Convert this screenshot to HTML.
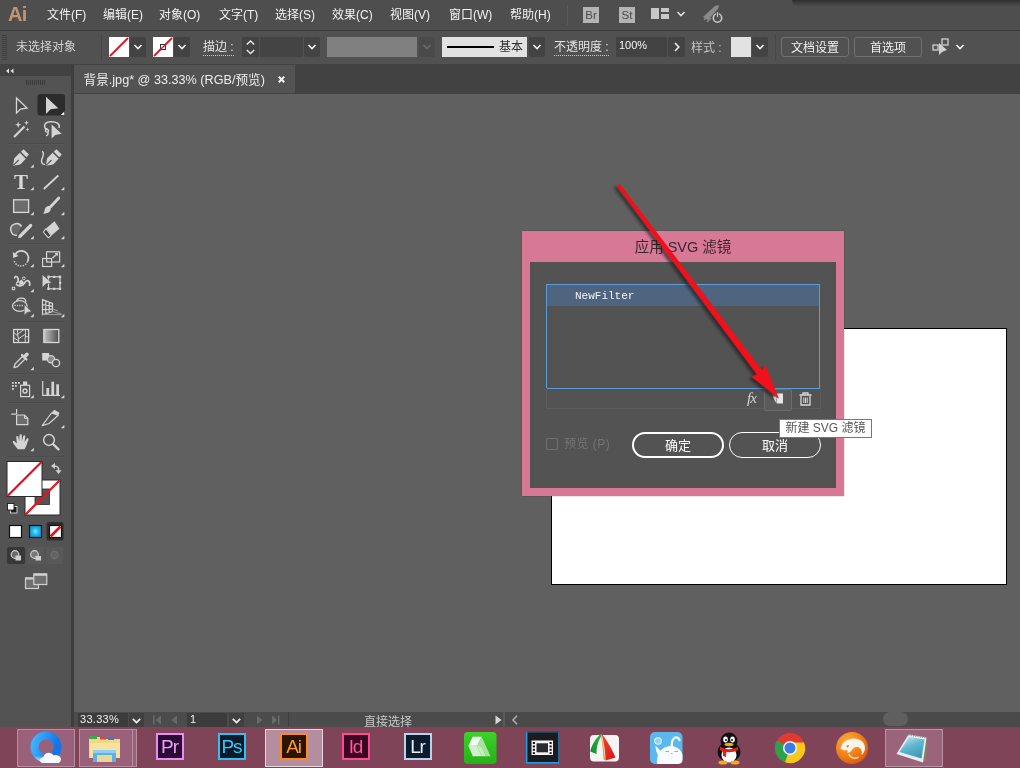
<!DOCTYPE html>
<html lang="zh-CN">
<head>
<meta charset="utf-8">
<title>Adobe Illustrator - 应用 SVG 滤镜</title>
<style>
html,body{margin:0;padding:0;}
body{width:1020px;height:768px;overflow:hidden;position:relative;background:#606060;
 font-family:"Liberation Sans","Noto Sans CJK SC",sans-serif;font-size:12px;color:#e0e0e0;}
.abs,.abs>*{position:absolute;}
svg{position:absolute;overflow:visible;}
/* menubar */
#menubar{left:0;top:0;width:1020px;height:30px;background:#4e4e4e;}
#menubar .mi{top:6px;font-size:12px;color:#f2f2f2;white-space:nowrap;line-height:18px;}
#ailogo{left:8px;top:2px;font-size:20px;line-height:24px;font-weight:bold;color:#c49470;letter-spacing:-0.8px;}
.sq{width:16px;height:16px;background:#b4b4b4;color:#484848;font-size:11.5px;font-weight:normal;line-height:16px;text-align:center;top:7px;}
/* control bar */
#ctrlbar{left:0;top:30px;width:1020px;height:34px;background:#515151;border-top:1px solid #3a3a3a;box-sizing:border-box;}
#ctrlbar .t{font-size:12px;line-height:16px;white-space:nowrap;color:#e4e4e4;top:8px;}
#ctrlbar .dot{border-bottom:1px dotted #c8c8c8;line-height:15px;top:9px;}
.dd{top:6px;height:20px;width:16px;background:#434343;border-radius:2px;}
.chev{position:absolute;left:4px;top:7px;width:8px;height:6px;}
.btn{top:6px;height:18px;border:1px solid #707070;border-radius:3px;color:#f0f0f0;font-size:12px;line-height:20px;text-align:center;}
/* tab bar */
#tabbar{left:0;top:64px;width:1020px;height:30px;background:#424242;}
#tab{left:74px;top:1px;width:221px;height:28px;background:#535353;}
#tab .tt{left:9.5px;top:6px;font-size:12.65px;line-height:18px;color:#ececec;white-space:nowrap;}
/* toolbar */
#toolbar{left:0;top:64px;width:74px;height:663px;background:#535353;border-right:3px solid #3e3e3e;box-sizing:border-box;}
#tbhead{left:0;top:0;width:71px;height:12px;background:#424242;}
.sep{left:7px;width:57px;height:1px;background:#4b4b4b;border-bottom:1px solid #575757;}
.tri{width:0;height:0;border-left:3px solid transparent;border-bottom:3px solid #d6d6d6;}
/* canvas etc */
#canvas{left:74px;top:94px;width:946px;height:618px;background:#606060;}
#artboard{left:551px;top:328px;width:454px;height:255px;background:#fff;border:1px solid #000;}
#statusbar{left:74px;top:712px;width:946px;height:15px;background:#4b4b4b;overflow:hidden;}
#taskbar{left:0;top:727px;width:1020px;height:41px;background:#804459;}
.tbbtn{top:2px;height:38px;border:1px solid #b98d9e;background:#99627a;box-sizing:border-box;}
.app{width:28px;height:27px;box-sizing:border-box;border:2px solid;font-weight:normal;font-size:19px;line-height:23px;text-align:center;top:6px;letter-spacing:-1.1px;text-indent:-1px;}
/* dialog */
#dlg{left:522px;top:231px;width:322px;height:265px;background:#d77896;box-shadow:0 0 1px rgba(30,20,25,0.6);}
#dlgin{left:8px;top:31px;width:306px;height:226px;background:#535353;}
#dlgtitle{left:0;top:5px;width:322px;text-align:center;font-size:14.5px;line-height:22px;color:#3b2730;white-space:pre;}
#list{left:24px;top:53px;width:272px;height:103px;border:1px solid #5b9bd8;background:#535353;}
#sel{left:0;top:0;width:272px;height:21px;background:#4f657f;}
#sel span{left:28px;top:4px;font-family:"Liberation Mono",monospace;font-size:11px;line-height:15px;color:#f4f4f4;}
.pill{top:201px;height:26px;border-radius:13px;box-sizing:border-box;color:#fff;font-size:13px;text-align:center;}
#tooltip{left:779px;top:419px;width:93px;height:19px;box-sizing:border-box;border:1px solid #767676;background:#fff;color:#555;font-size:12px;line-height:17px;text-align:center;white-space:pre;}
.mi,#ailogo,.sq,#ctrlbar .t,.btn,#tab .tt,.st,.app,#dlgtitle,#sel span,.pill,#tooltip{opacity:.999;}
</style>
</head>
<body>
<div id="canvas" class="abs"></div>
<div id="artboard" class="abs"></div>

<!-- MENUBAR -->
<div id="menubar" class="abs">
 <div id="ailogo">Ai</div>
 <div class="mi" style="left:47px">文件(F)</div>
 <div class="mi" style="left:103px">编辑(E)</div>
 <div class="mi" style="left:159px">对象(O)</div>
 <div class="mi" style="left:219px">文字(T)</div>
 <div class="mi" style="left:275px">选择(S)</div>
 <div class="mi" style="left:332px">效果(C)</div>
 <div class="mi" style="left:390px">视图(V)</div>
 <div class="mi" style="left:449px">窗口(W)</div>
 <div class="mi" style="left:510px">帮助(H)</div>
 <div style="left:567px;top:5px;width:1px;height:20px;background:#5a5a5a"></div>
 <div class="sq" style="left:583px">Br</div>
 <div class="sq" style="left:619px">St</div>
 <svg style="left:651px;top:8px" width="18" height="12"><rect x="0" y="0" width="8" height="11" fill="#c8c8c8"/><rect x="10" y="0" width="8" height="4" fill="#c8c8c8"/><rect x="10" y="6" width="8" height="5" fill="#c8c8c8"/></svg>
 <svg style="left:677px;top:11px" width="8" height="6"><path d="M0.5 1 L4 4.5 L7.5 1" fill="none" stroke="#e0e0e0" stroke-width="1.6"/></svg>
 <svg style="left:701px;top:4px" width="23" height="20"><path d="M2 13 L14 2 L18 1 L17 5 L7 16 Z" fill="#8a8a8a"/><path d="M3 16 L8 11 M6 18 L10 14" stroke="#8a8a8a" stroke-width="1.5"/><circle cx="16.500" cy="14" r="4.200" fill="#4e4e4e" stroke="#c8c8c8" stroke-width="1.6"/><rect x="15.600" y="7.500" width="1.800" height="6" fill="#c8c8c8" stroke="#4e4e4e" stroke-width="0.800"/></svg>
 <div style="left:792px;top:0;width:228px;height:7px;border-bottom-left-radius:7px;background:linear-gradient(to bottom,rgba(20,20,20,0.550),rgba(20,20,20,0.250) 45%,rgba(20,20,20,0))"></div>
</div>
<!-- CONTROL BAR -->
<div id="ctrlbar" class="abs">
 <svg style="left:2px;top:4px" width="5" height="26"><g fill="#404040"><rect x="0" y="0" width="5" height="1"/><rect x="0" y="2" width="5" height="1"/><rect x="0" y="4" width="5" height="1"/><rect x="0" y="6" width="5" height="1"/><rect x="0" y="8" width="5" height="1"/><rect x="0" y="10" width="5" height="1"/><rect x="0" y="12" width="5" height="1"/><rect x="0" y="14" width="5" height="1"/><rect x="0" y="16" width="5" height="1"/><rect x="0" y="18" width="5" height="1"/><rect x="0" y="20" width="5" height="1"/><rect x="0" y="22" width="5" height="1"/><rect x="0" y="24" width="5" height="1"/></g></svg>
 <div class="t" style="left:16px;color:#d2d2d2">未选择对象</div>
 <div style="left:101px;top:3px;width:1px;height:27px;background:#474747"></div>
 <!-- fill swatch -->
 <svg style="left:109px;top:6px" width="20" height="20"><rect width="20" height="20" fill="#fff"/><path d="M1 19 L19 1" stroke="#d0202a" stroke-width="2"/></svg>
 <div class="dd" style="left:130px"><svg class="chev" viewBox="0 0 8 6"><path d="M0.5 1 L4 4.5 L7.5 1" fill="none" stroke="#f0f0f0" stroke-width="1.6"/></svg></div>
 <!-- stroke swatch -->
 <svg style="left:153px;top:6px" width="20" height="20"><rect width="20" height="20" fill="#fff"/><path d="M1 19 L19 1" stroke="#d0202a" stroke-width="2"/><rect x="7.500" y="7.500" width="5" height="5" fill="#fff" stroke="#333" stroke-width="1"/><path d="M7 13 L13 7" stroke="#d0202a" stroke-width="1.500"/></svg>
 <div class="dd" style="left:174px"><svg class="chev" viewBox="0 0 8 6"><path d="M0.5 1 L4 4.500 L7.500 1" fill="none" stroke="#f0f0f0" stroke-width="1.600"/></svg></div>
 <div class="t dot" style="left:203px">描边 :</div>
 <!-- stepper -->
 <div style="left:242px;top:6px;width:17px;height:20px;background:#434343;border-radius:2px"></div>
 <svg style="left:246px;top:9px" width="9" height="15"><path d="M0.800 4.500 L4.500 1 L8.200 4.500 M0.800 10 L4.500 13.500 L8.200 10" fill="none" stroke="#e8e8e8" stroke-width="1.500"/></svg>
 <div style="left:260px;top:6px;width:43px;height:20px;background:#444444"></div>
 <div class="dd" style="left:304px"><svg class="chev" viewBox="0 0 8 6"><path d="M0.500 1 L4 4.500 L7.500 1" fill="none" stroke="#f0f0f0" stroke-width="1.600"/></svg></div>
 <div style="left:327px;top:6px;width:90px;height:20px;background:#808080"></div>
 <div class="dd" style="left:419px;background:#4a4a4a"><svg class="chev" viewBox="0 0 8 6"><path d="M0.500 1 L4 4.500 L7.500 1" fill="none" stroke="#6a6a6a" stroke-width="1.600"/></svg></div>
 <!-- stroke profile -->
 <div style="left:442px;top:6px;width:85px;height:20px;background:#e2e2e2"></div>
 <div style="left:447px;top:15px;width:47px;height:2px;background:#000"></div>
 <div class="t" style="left:499px;color:#303030">基本</div>
 <div class="dd" style="left:529px"><svg class="chev" viewBox="0 0 8 6"><path d="M0.500 1 L4 4.500 L7.500 1" fill="none" stroke="#f0f0f0" stroke-width="1.600"/></svg></div>
 <div class="t dot" style="left:554px">不透明度 :</div>
 <div style="left:616px;top:6px;width:51px;height:20px;background:#434343"></div>
 <div class="t" style="left:619px;top:6px;font-size:11px;color:#f4f4f4">100%</div>
 <div class="dd" style="left:668px;width:17px"><svg style="left:6px;top:5px" width="6" height="10"><path d="M1 1 L4.800 5 L1 9" fill="none" stroke="#f0f0f0" stroke-width="1.600"/></svg></div>
 <div class="t" style="left:691px;top:9px;color:#c4c4c4">样式 :</div>
 <div style="left:731px;top:6px;width:20px;height:20px;background:#e2e2e2"></div>
 <div class="dd" style="left:752px"><svg class="chev" viewBox="0 0 8 6"><path d="M0.500 1 L4 4.500 L7.500 1" fill="none" stroke="#f0f0f0" stroke-width="1.600"/></svg></div>
 <div style="left:775px;top:3px;width:1px;height:27px;background:#474747"></div>
 <div class="btn" style="left:781px;width:66px">文档设置</div>
 <div class="btn" style="left:854px;width:66px">首选项</div>
 <svg style="left:932px;top:7px" width="19" height="19"><rect x="1" y="7" width="5" height="5" fill="none" stroke="#d0d0d0" stroke-width="1.300"/><rect x="10" y="1" width="6" height="6" fill="none" stroke="#d0d0d0" stroke-width="1.300"/><path d="M7 5 L7 17 L10 14 L15 12 Z" fill="#d0d0d0"/></svg>
 <svg style="left:956px;top:13px" width="8" height="6"><path d="M0.500 1 L4 4.500 L7.500 1" fill="none" stroke="#f0f0f0" stroke-width="1.600"/></svg>
</div>

<!-- TAB BAR -->
<div id="tabbar" class="abs">
 <div id="tab" class="abs">
  <div class="tt">背景.jpg* @ 33.33% (RGB/预览)</div>
  <svg style="left:204px;top:10.500px" width="7" height="7"><path d="M0.800 0.800 L6.200 6.200 M6.200 0.800 L0.800 6.200" stroke="#f4f4f4" stroke-width="2"/></svg>
 </div>
</div>
<!-- TOOLBAR -->
<div id="toolbar" class="abs">
 <div id="tbhead"></div>
 <div class="sep" style="top:79px"></div>
 <div class="sep" style="top:179px"></div>
 <div class="sep" style="top:257px"></div>
 <div class="sep" style="top:309px"></div>
 <div class="sep" style="top:338px"></div>
 <div class="sep" style="top:392px"></div>
 <svg style="left:0;top:0" width="72" height="663" viewBox="0 64 72 663">
  <g fill="#d4d4d4" stroke="none">
   <!-- collapse arrows -->
   <path d="M9 68.500 L6 71 L9 73.500 Z M13.500 68.500 L10.500 71 L13.500 73.500 Z" fill="#e0e0e0"/>
   <!-- grip -->
   <g fill="#3c3c3c"><rect x="26" y="80" width="1" height="5"/><rect x="28" y="80" width="1" height="5"/><rect x="30" y="80" width="1" height="5"/><rect x="32" y="80" width="1" height="5"/><rect x="34" y="80" width="1" height="5"/><rect x="36" y="80" width="1" height="5"/><rect x="38" y="80" width="1" height="5"/><rect x="40" y="80" width="1" height="5"/><rect x="42" y="80" width="1" height="5"/><rect x="44" y="80" width="1" height="5"/></g>
   <!-- 1 selection -->
   <path d="M16.500 98 L16.500 113 L20.600 109 L27 108 Z" fill="#4a4a4a" stroke="#d8d8d8" stroke-width="1.300" stroke-linejoin="miter"/>
   <!-- 2 direct selection (active) -->
   <rect x="37.500" y="94" width="27.500" height="21.500" rx="3" fill="#2c2c2c"/>
   <path d="M46 96.800 L46 114 L50.600 109.300 L58.300 108.300 Z"/>
   <path d="M64.3 111.6 L64.3 115.1 L60.8 115.1 Z" fill="#f0f0f0"/>
   <!-- 3 magic wand -->
   <path d="M14 137 L24.500 126.500" stroke="#d4d4d4" stroke-width="2.200"/>
   <path d="M18.200 121.600 L19 124 L21.400 124.800 L19 125.600 L18.200 128 L17.400 125.600 L15 124.800 L17.400 124 Z"/>
   <path d="M26.500 120.300 L27.100 122.200 L29 122.800 L27.100 123.400 L26.500 125.300 L25.900 123.400 L24 122.800 L25.900 122.200 Z"/>
   <path d="M27.600 127.300 L28.100 129 L29.800 129.500 L28.100 130 L27.600 131.700 L27.100 130 L25.400 129.500 L27.100 129 Z"/>
   <!-- 4 lasso -->
   <path d="M47.800 130 C43 128 43.500 122.500 50 121.800 C56.500 121.200 60.500 124 59 128" fill="none" stroke="#d4d4d4" stroke-width="1.500"/>
   <path d="M47.500 128.500 C44.500 129 45 132.500 47.500 132 C49.500 131.500 48.500 129 47.500 130 M48 132 C48.500 134 47.500 135.500 46 136" fill="none" stroke="#d4d4d4" stroke-width="1.300"/>
   <path d="M51.600 124.500 L51.600 138.600 L55.300 135 L61.600 133.800 Z"/>
   <!-- 5 pen -->
   <path d="M13.0 165.700 L14.3 158.300 L19.8 152.800 L25.8 158.800 L20.4 164.400 Z"/>
   <path d="M21.0 151.800 L23.6 149.200 L29.0 154.600 L26.4 157.200 Z"/>
   <path d="M13.3 165.400 L18.7 160" stroke="#535353" stroke-width="1.100"/>
   <path d="M33.800 164.300 L33.800 167.800 L30.300 167.800 Z"/>
   <!-- 6 curvature pen -->
   <path d="M45.8 165.700 L47.1 158.300 L52.6 152.800 L58.6 158.800 L53.2 164.400 Z"/>
   <path d="M53.8 151.800 L56.4 149.200 L61.8 154.600 L59.2 157.200 Z"/>
   <path d="M46.1 165.400 L51.5 160" stroke="#535353" stroke-width="1.100"/>
   <path d="M42.200 151.300 C45.500 154 42 157 41.500 160.500 C41.200 163 43 164.800 45 164.300" fill="none" stroke="#d4d4d4" stroke-width="1.400"/>
   <!-- 7 type -->
   <text x="21" y="189" font-family="Liberation Serif,serif" font-size="21" font-weight="bold" text-anchor="middle" fill="#d8d8d8" opacity="0.999">T</text>
   <path d="M33.8 186.8 L33.8 190.3 L30.3 190.3 Z"/>
   <!-- 8 line -->
   <path d="M43.800 189 L58.300 175.500" stroke="#d4d4d4" stroke-width="1.800"/>
   <path d="M64.3 186.8 L64.3 190.3 L60.8 190.3 Z"/>
   <!-- 9 rectangle -->
   <rect x="13.600" y="199.800" width="15" height="12.600" fill="#6c6c6c" stroke="#d8d8d8" stroke-width="1.300"/>
   <path d="M33.8 211.8 L33.8 215.3 L30.3 215.3 Z"/>
   <!-- 10 brush -->
   <path d="M58.800 198 L50.300 207" stroke="#d4d4d4" stroke-width="2.800" stroke-linecap="round"/>
   <path d="M49.500 206.200 C52 208.500 50.500 212.500 47 213 L43.200 213.900 C45 212 44 208.500 46.500 206.800 C47.500 206 48.600 205.700 49.500 206.200 Z"/>
   <path d="M64.3 211.8 L64.3 215.3 L60.8 215.3 Z"/>
   <!-- 11 shaper -->
   <path d="M21.500 226.500 A5.800 5.800 0 1 0 17 235.300" fill="#686868" stroke="#d4d4d4" stroke-width="1.500"/>
   <path d="M30.700 225.500 L20.300 236" stroke="#d4d4d4" stroke-width="3.200" stroke-linecap="round"/>
   <path d="M18 238.200 L19 235 L21.200 237.200 Z"/>
   <path d="M33.8 235.8 L33.8 239.3 L30.3 239.3 Z"/>
   <!-- 12 eraser -->
   <path d="M54.500 221.300 L59.400 228.700 L51.500 235.400 L46.300 228.200 Z"/>
   <path d="M46 228.700 L51 235.700 L48.300 237.700 L43.400 232 Z" fill="#3e3e3e" stroke="#d4d4d4" stroke-width="1.100"/>
   <path d="M64.3 235.8 L64.3 239.3 L60.8 239.3 Z"/>
   <!-- 13 rotate -->
   <path d="M15.200 254.500 A7 7 0 0 1 27.500 261.500" fill="none" stroke="#d4d4d4" stroke-width="1.700"/>
   <path d="M27.500 261.500 A7 7 0 0 1 14 260" fill="none" stroke="#d4d4d4" stroke-width="1.500" stroke-dasharray="1.300 1.300"/>
   <path d="M12.800 252 L13.200 258 L18.500 256 Z"/>
   <path d="M33.8 263.8 L33.8 267.3 L30.3 267.3 Z"/>
   <!-- 14 scale -->
   <rect x="46.600" y="251.800" width="13" height="10.200" fill="none" stroke="#d4d4d4" stroke-width="1.200"/>
   <rect x="42.600" y="258.500" width="9" height="8" fill="none" stroke="#d4d4d4" stroke-width="1.200"/>
   <path d="M52.500 258 L57 254" stroke="#d4d4d4" stroke-width="1.200"/>
   <path d="M58 252.800 L57.800 256.300 L54.600 253.200 Z"/>
   <path d="M64.3 263.8 L64.3 267.3 L60.8 267.3 Z"/>
   <!-- 15 width/warp -->
   <path d="M14.500 278.500 C15 275.500 17.500 276 18.200 278.800 C18.800 281 17 282.500 16.500 284.500 C19 287 23 285.500 24.500 283 C25.500 281 27 280 28.500 281 C30 282 30 284 29.500 286" fill="none" stroke="#d4d4d4" stroke-width="1.700"/>
   <path d="M17.500 283 C19 285.800 22.500 284.800 24 282.500 L21.500 279.500 Z"/>
   <circle cx="23.800" cy="278.300" r="1.400" fill="#535353" stroke="#d4d4d4" stroke-width="1"/>
   <circle cx="18.200" cy="283.600" r="1.600" fill="#535353" stroke="#d4d4d4" stroke-width="1"/>
   <rect x="12.300" y="287.300" width="2.400" height="2.400" fill="#535353" stroke="#d4d4d4" stroke-width="1"/>
   <path d="M33.8 288.8 L33.8 292.3 L30.3 292.3 Z"/>
   <!-- 16 free transform -->
   <rect x="48.500" y="276.800" width="11.500" height="12" fill="none" stroke="#d4d4d4" stroke-width="1.200"/>
   <g><rect x="47.300" y="275.600" width="2.400" height="2.400"/><rect x="58.800" y="275.600" width="2.400" height="2.400"/><rect x="47.300" y="287.600" width="2.400" height="2.400"/><rect x="58.800" y="287.600" width="2.400" height="2.400"/><rect x="53.100" y="275.800" width="2.200" height="2.200"/><rect x="53.100" y="287.700" width="2.200" height="2.200"/><rect x="59" y="281.700" width="2.200" height="2.200"/></g>
   <path d="M42.200 274.400 L42.200 287.600 L46 283.800 L51.800 282.900 Z" stroke="#535353" stroke-width="0.600"/>
   <!-- 17 shape builder -->
   <ellipse cx="19.800" cy="306" rx="7.300" ry="5.300" fill="none" stroke="#d4d4d4" stroke-width="1.300"/>
   <path d="M16.500 301.500 A4.800 4 0 0 1 26 301.800" fill="none" stroke="#d4d4d4" stroke-width="1.300"/>
   <path d="M14.500 305.500 L24 305.500" stroke="#d4d4d4" stroke-width="1.300" stroke-dasharray="1.200 1.200"/>
   <path d="M24.200 304.600 L24.200 315.300 L27.200 312.400 L31.600 311.600 Z" stroke="#535353" stroke-width="0.600"/>
   <path d="M33.8 313.8 L33.8 317.3 L30.3 317.3 Z"/>
   <!-- 18 perspective grid -->
   <path d="M42.500 299.600 L42.500 314.600 L52.500 311.500 L52.500 303.500 Z M42.500 304.600 L52.500 306.200 M42.500 309.600 L52.500 308.900 M45.800 300.900 L45.800 313.600 M49.200 302.200 L49.200 312.500" fill="none" stroke="#d4d4d4" stroke-width="1.200"/>
   <path d="M42.500 314.600 L61.500 314.600 M52.500 311.500 L61.500 314 M52.500 308.900 L58 311" fill="none" stroke="#a0a0a0" stroke-width="1"/>
   <path d="M64.3 313.8 L64.3 317.3 L60.8 317.3 Z"/>
   <!-- 19 mesh -->
   <rect x="13.600" y="329.500" width="15" height="13" fill="none" stroke="#d8d8d8" stroke-width="1.300"/>
   <path d="M18.600 342.500 C19.200 338 16.600 334 17.600 329.500 M25.300 329.500 C26.400 334 24.400 338 25.400 342.500 M18.300 339 L25.200 334.300 M17.300 334.500 L23.500 329.800 M13.600 337.500 L18.400 340.800 M13.600 332.300 L17.300 335.800 M25.300 336.700 L28.600 336.700" fill="none" stroke="#d4d4d4" stroke-width="1"/>
   <!-- 20 gradient -->
   <rect x="43.800" y="329.500" width="15" height="13" fill="url(#gradtool)" stroke="#d8d8d8" stroke-width="1.300"/>
   <!-- 21 eyedropper -->
   <path d="M14 367.500 L15 364 L22.500 356.500 L25 359 L17.500 366.500 Z" fill="#535353" stroke="#d4d4d4" stroke-width="1.300" stroke-linejoin="round"/>
   <path d="M22 355 L26.500 359.500" stroke="#d4d4d4" stroke-width="2.200" stroke-linecap="round"/>
   <path d="M24.800 356.500 L27 354.300" stroke="#d4d4d4" stroke-width="3.600" stroke-linecap="round"/>
   <path d="M33.8 366.8 L33.8 370.3 L30.3 370.3 Z"/>
   <!-- 22 blend -->
   <rect x="42.200" y="353" width="7" height="7.500"/>
   <circle cx="51" cy="359.300" r="3.600" fill="#8a8a8a" stroke="#d4d4d4" stroke-width="1.200"/>
   <circle cx="56" cy="363" r="3.600" fill="#535353" stroke="#d4d4d4" stroke-width="1.300"/>
   <!-- 23 symbol sprayer -->
   <rect x="20.600" y="385.300" width="9" height="11.300" fill="none" stroke="#d4d4d4" stroke-width="1.200"/>
   <rect x="23" y="381.500" width="4.200" height="3.500"/>
   <circle cx="25" cy="391" r="2" fill="none" stroke="#d4d4d4" stroke-width="1.400"/>
   <g><rect x="12" y="382" width="1.800" height="1.800"/><rect x="15" y="382" width="1.800" height="1.800"/><rect x="18" y="382" width="1.800" height="1.800"/><rect x="12" y="385" width="1.800" height="1.800"/><rect x="15" y="385" width="1.800" height="1.800"/><rect x="12" y="388" width="1.800" height="1.800"/></g>
   <path d="M33.8 394.8 L33.8 398.3 L30.3 398.3 Z"/>
   <!-- 24 graph -->
   <path d="M42.700 381 L42.700 395.400 L60 395.400" fill="none" stroke="#d4d4d4" stroke-width="1.200"/>
   <rect x="46.400" y="388" width="2.700" height="7"/><rect x="51.400" y="381.700" width="2.700" height="13.300"/><rect x="56.300" y="384.300" width="2.700" height="10.700"/>
   <path d="M64.3 394.8 L64.3 398.3 L60.8 398.3 Z"/>
   <!-- 25 artboard -->
   <path d="M16.600 415 L24.500 415 L27.800 418.300 L27.800 424.600 L16.600 424.600 Z" fill="#6c6c6c" stroke="#d4d4d4" stroke-width="1.200"/>
   <path d="M24.500 415 L24.500 418.300 L27.800 418.300" fill="none" stroke="#d4d4d4" stroke-width="1"/>
   <path d="M16.600 409 L16.600 414 M11.200 414.200 L16 414.200" stroke="#d4d4d4" stroke-width="1.200"/>
   <!-- 26 slice -->
   <path d="M42.200 425.600 L51.500 413 L58.300 415.300 L49 423.500 Z" fill="#535353" stroke="#d4d4d4" stroke-width="1.200" stroke-linejoin="round"/>
   <path d="M51.300 413 L54.300 409.700 L59.500 412.800 L58 415.600 Z"/>
   <path d="M64.3 424.8 L64.3 428.3 L60.8 428.3 Z"/>
   <!-- 27 hand -->
   <path d="M17.800 449.300 C15.500 446.500 14 444.500 12.800 442.500 C12.200 441.300 13.800 440.500 14.800 441.600 L16.800 443.600 L16.300 437 C16.200 435.600 18.200 435.500 18.400 436.900 L19.200 441.300 L19.600 435.200 C19.700 433.800 21.800 433.800 21.800 435.300 L21.900 441.300 L23.200 436 C23.500 434.700 25.500 435.100 25.300 436.500 L24.500 442.200 L26.600 438.800 C27.400 437.700 29 438.600 28.400 439.900 C27 443 26.500 446 24.500 449.300 Z"/>
   <path d="M33.8 447.8 L33.8 451.3 L30.3 451.3 Z"/>
   <!-- 28 zoom -->
   <circle cx="49" cy="440" r="5.400" fill="none" stroke="#d4d4d4" stroke-width="1.500"/>
   <path d="M53 444 L58.500 449.300" stroke="#d4d4d4" stroke-width="2.400" stroke-linecap="round"/>
  </g>
  <defs>
   <linearGradient id="gradtool" x1="0" y1="0" x2="1" y2="0"><stop offset="0" stop-color="#c4c4c4"/><stop offset="1" stop-color="#4c4c4c"/></linearGradient>
   <radialGradient id="bluegrad" cx="0.500" cy="0.500" r="0.600"><stop offset="0" stop-color="#7fe8ff"/><stop offset="0.500" stop-color="#18b4ea"/><stop offset="1" stop-color="#0a8fd6"/></radialGradient>
  </defs>
  <!-- fill / stroke -->
  <g>
   <rect x="25" y="480" width="35" height="35" fill="#fff" stroke="#2a2a2a" stroke-width="1"/>
   <rect x="35" y="489" width="14.500" height="15.500" fill="#545454" stroke="#2a2a2a" stroke-width="0.800"/>
   <path d="M25.500 514.500 L59.500 480.500" stroke="#e01822" stroke-width="2.300"/>
   <rect x="7" y="461.500" width="35" height="35" fill="#fff" stroke="#2a2a2a" stroke-width="1"/>
   <path d="M7.500 496 L41.500 462" stroke="#d01a28" stroke-width="2.300"/>
   <!-- swap -->
   <path d="M54 466 C58 466 59 468 58.500 471" fill="none" stroke="#d0d0d0" stroke-width="1.600"/>
   <path d="M51 466 L55 463 L55 469 Z M58.500 474 L55.500 470.200 L61.500 470.200 Z" fill="#d0d0d0"/>
   <!-- default -->
   <rect x="10.500" y="506.500" width="6.500" height="6.500" fill="#1c1c1c" stroke="#d8d8d8" stroke-width="0.900"/>
   <rect x="7.500" y="503.500" width="6.500" height="6.500" fill="#fff" stroke="#1c1c1c" stroke-width="0.900"/>
   <!-- colour / gradient / none -->
   <rect x="46.500" y="522" width="17" height="18.500" rx="2" fill="#2f2f2f"/>
   <rect x="9.500" y="525.500" width="12" height="12" fill="#fff" stroke="#111" stroke-width="1.200"/>
   <rect x="29.500" y="525.500" width="12" height="12" fill="url(#bluegrad)" stroke="#111" stroke-width="1.200"/>
   <rect x="49.500" y="525.500" width="12" height="12" fill="#fff" stroke="#111" stroke-width="1.200"/>
   <path d="M50.500 536.500 L60.500 526.500" stroke="#e8101c" stroke-width="2.600"/>
   <!-- draw modes -->
   <rect x="7" y="547" width="18" height="17" rx="2" fill="#383838"/>
   <rect x="27" y="547" width="17" height="17" rx="1" fill="#585858"/>
   <rect x="46" y="547" width="17.500" height="17" rx="1" fill="#595959"/>
   <circle cx="15" cy="554.500" r="3.800" fill="#6a6a6a" stroke="#d0d0d0" stroke-width="1.200"/>
   <rect x="15.500" y="555.500" width="5.500" height="5" fill="#d0d0d0"/>
   <circle cx="34.500" cy="554.500" r="3.800" fill="#7a7a7a" stroke="#d0d0d0" stroke-width="1.200"/>
   <rect x="35.500" y="556" width="5.500" height="4.500" fill="#d0d0d0"/>
   <circle cx="54.500" cy="555" r="3.600" fill="#646464" stroke="#6e6e6e" stroke-width="1.200"/>
   <!-- screen mode -->
   <rect x="25.500" y="578" width="13" height="10.500" fill="#707070" stroke="#d0d0d0" stroke-width="1.200"/>
   <rect x="25.500" y="577.500" width="13" height="2" fill="#d0d0d0"/>
   <rect x="33.800" y="574" width="13" height="10.500" fill="#707070" stroke="#d0d0d0" stroke-width="1.200"/>
   <rect x="33.800" y="573.500" width="13" height="2.300" fill="#d0d0d0"/>
  </g>
 </svg>
</div>
<!-- STATUS BAR -->
<div id="statusbar" class="abs">
 <div style="left:4px;top:1px;width:50px;height:14px;background:#3c3c3c"></div>
 <div class="st" style="left:6px;top:0;font-size:11px;line-height:15px;color:#f0f0f0;letter-spacing:0.300px">33.33%</div>
 <div style="left:55px;top:1px;width:15px;height:14px;background:#404040"></div>
 <svg style="left:58px;top:6px" width="9" height="6"><path d="M0.800 0.800 L4.500 4.500 L8.200 0.800" fill="none" stroke="#f0f0f0" stroke-width="1.700"/></svg>
 <svg style="left:78px;top:3px" width="32" height="10"><g fill="#686868"><rect x="1" y="0.500" width="1.600" height="9"/><path d="M9 0.500 L9 9.500 L3.500 5 Z"/><path d="M25 0.500 L25 9.500 L19.500 5 Z"/></g></svg>
 <div style="left:113px;top:1px;width:40px;height:14px;background:#3c3c3c"></div>
 <div class="st" style="left:116px;top:0;font-size:11px;line-height:15px;color:#f0f0f0">1</div>
 <div style="left:155px;top:1px;width:15px;height:14px;background:#404040"></div>
 <svg style="left:158px;top:6px" width="9" height="6"><path d="M0.800 0.800 L4.500 4.500 L8.200 0.800" fill="none" stroke="#f0f0f0" stroke-width="1.700"/></svg>
 <svg style="left:180px;top:3px" width="32" height="10"><g fill="#686868"><path d="M3 0.500 L3 9.500 L8.500 5 Z"/><path d="M18 0.500 L18 9.500 L23.500 5 Z"/><rect x="24" y="0.500" width="1.600" height="9"/></g></svg>
 <div style="left:214px;top:0;width:1px;height:15px;background:#3e3e3e"></div>
 <div class="st" style="left:290px;top:2px;font-size:12px;line-height:16px;color:#c8c8c8;white-space:nowrap">直接选择</div>
 <svg style="left:421px;top:3px" width="7" height="10"><path d="M0.500 0.500 L0.500 9.500 L6.500 5 Z" fill="#d8d8d8"/></svg>
 <div style="left:430px;top:0;width:516px;height:15px;background:#4a4a4a"></div>
 <div style="left:429px;top:0;width:2px;height:15px;background:#5a5a5a"></div>
 <svg style="left:438px;top:3px" width="6" height="10"><path d="M5 0.800 L1 5 L5 9.200" fill="none" stroke="#b0b0b0" stroke-width="1.500"/></svg>
 <div style="left:809px;top:0px;width:25px;height:14px;border-radius:7px;background:#5f5f5f"></div>
</div>

<!-- TASKBAR -->
<div id="taskbar" class="abs">
 <div class="tbbtn" style="left:17px;width:58px"></div>
 <div class="tbbtn" style="left:79px;width:58px"></div>
 <div style="left:132px;top:3px;width:1px;height:36px;background:#b98d9e"></div>
 <div class="tbbtn" style="left:265px;width:58px;background:#b48d9f;border-color:#e6d6dd"></div>
 <div class="tbbtn" style="left:885px;width:58px;background:#9a647b;border-color:#bb92a2"></div>
 <!-- QQ browser -->
 <svg style="left:30px;top:4px" width="33" height="33"><defs><linearGradient id="qqb" x1="0" y1="0" x2="1" y2="0.300"><stop offset="0" stop-color="#3fb4ff"/><stop offset="1" stop-color="#1674e6"/></linearGradient><linearGradient id="qqw" x1="0" y1="0" x2="0" y2="1"><stop offset="0.500" stop-color="#fff" stop-opacity="0"/><stop offset="1" stop-color="#fff" stop-opacity="0.900"/></linearGradient></defs><circle cx="16" cy="16" r="11.500" fill="none" stroke="url(#qqb)" stroke-width="8"/><path d="M1.500 20 A15.500 15.500 0 0 0 14 31.400 L14 23.500 A7.500 7.500 0 0 1 8.800 18 Z" fill="url(#qqw)"/><path d="M13 32 C9 32 9 26.500 13.500 26 C14 21 21.500 20 23.500 24.500 C28 22.500 32.500 27 30.500 30 C30 31.500 29 32 27.500 32 Z" fill="#f6faff"/></svg>
 <!-- explorer -->
 <svg style="left:88px;top:7px" width="34" height="29"><path d="M1 3 L13 3 L15 5 L32 5 L32 24 L1 24 Z" fill="#f3d684"/><rect x="1" y="2" width="8" height="3" fill="#3aa84a"/><rect x="12" y="3" width="6" height="2.500" fill="#d8463a"/><rect x="20" y="3.500" width="6" height="2.500" fill="#3a78d8"/><path d="M2 9 L32 9 L32 24 L2 24 Z" fill="#f7e3a0"/><path d="M5 18 L28 18 L28 28 L5 28 Z" fill="#5fb0e8"/><path d="M9 21 L24 21 L24 28 L9 28 Z" fill="#e8d890"/><path d="M5 16 L28 16 L28 19 L5 19 Z" fill="#8fd0f8"/></svg>
 <!-- adobe apps -->
 <div class="app" style="left:156px;background:#2a0a35;border-color:#e58cf5;color:#eaa0fa">Pr</div>
 <div class="app" style="left:218px;background:#0a1a28;border-color:#30c0f0;color:#38c8f8">Ps</div>
 <div class="app" style="left:280px;background:#2a1300;border-color:#ff8a1a;color:#ff9a2a">Ai</div>
 <div class="app" style="left:342px;background:#3a0622;border-color:#ff4a92;color:#ff5a9c">Id</div>
 <div class="app" style="left:404px;background:#0c1c2c;border-color:#b4d4f0;color:#e0f0ff">Lr</div>
 <!-- green app -->
 <svg style="left:464px;top:5px" width="33" height="33"><defs><linearGradient id="gapp" x1="0" y1="0" x2="0" y2="1"><stop offset="0" stop-color="#3fd02c"/><stop offset="1" stop-color="#22b214"/></linearGradient></defs><rect x="0" y="0" width="32.500" height="32" rx="3.500" fill="url(#gapp)"/><path d="M8.800 4.800 L17.600 4.800 L13.200 13.800 L4.400 13.800 Z" fill="#f6fff4"/><path d="M4.400 13.800 L13.200 13.800 L17.600 24.200 L8.800 24.200 Z" fill="#d4ecd0"/><path d="M17.600 4.800 L26.500 24.200 L22 24.200 L17.600 14.500 L13.200 13.800 Z" fill="#a4e49c"/><path d="M17.600 14.500 L22 24.200 L17.600 24.200 L13.200 13.800 Z" fill="#c4eebc"/></svg>
 <!-- film -->
 <svg style="left:526px;top:4px" width="34" height="33"><rect x="0" y="0.500" width="33" height="31.500" fill="#1c1c1f"/><path d="M0.700 0.500 L0.700 31.700 L33 31.700" fill="none" stroke="#1f9fe0" stroke-width="1.400"/><path d="M0 1 L33 1 M32.500 1 L32.500 31" stroke="#2a6a98" stroke-width="1"/><rect x="5.500" y="9.500" width="21.500" height="14.500" fill="#f4f4f4"/><rect x="10.500" y="12.300" width="11.500" height="9" fill="#2a2a2c"/><g fill="#1c1c1f"><rect x="6.800" y="11" width="2.200" height="2"/><rect x="6.800" y="14.400" width="2.200" height="2"/><rect x="6.800" y="17.800" width="2.200" height="2"/><rect x="6.800" y="21.200" width="2.200" height="1.800"/><rect x="23.500" y="11" width="2.200" height="2"/><rect x="23.500" y="14.400" width="2.200" height="2"/><rect x="23.500" y="17.800" width="2.200" height="2"/><rect x="23.500" y="21.200" width="2.200" height="1.800"/></g></svg>
 <!-- red/green -->
 <svg style="left:590px;top:6px" width="30" height="30"><defs><linearGradient id="rg1" x1="0" y1="0" x2="1" y2="1"><stop offset="0" stop-color="#f04a28"/><stop offset="1" stop-color="#d41420"/></linearGradient><linearGradient id="rg2" x1="1" y1="0" x2="0" y2="1"><stop offset="0" stop-color="#35b545"/><stop offset="1" stop-color="#128a30"/></linearGradient></defs><rect x="0" y="2" width="29" height="26.500" rx="4" fill="#f4f4f4"/><path d="M10.500 1 C5.500 6 1.500 12 0.300 18.500 L6.500 21 C6.500 13 8.500 7 12 2 Z" fill="url(#rg2)"/><path d="M11.500 0.500 C16 6 22 16 25.500 24.500 L15.500 27.500 C15.500 18 13.500 8 11.500 0.500 Z" fill="url(#rg1)"/><path d="M11.200 1.500 C13 9 14.500 18 15 27.300 L13.500 26.500 C13 17 12 8 10.800 2.500 Z" fill="#f8962a"/></svg>
 <!-- bunny -->
 <svg style="left:650px;top:5px" width="33" height="33"><rect x="0" y="0" width="32.500" height="32" rx="5" fill="#5ab8ec"/><path d="M7 32 C6 22 12 13.500 21 14 C27 14.300 31.500 18 32.500 23 L32.500 28 C32.500 30.500 30.500 32 28 32 Z" fill="#f6fcff"/><path d="M5.500 14 C7.500 15 9.500 18 11.500 20 L9 25 C7 22 5.500 18 5.500 14 Z" fill="#f6fcff"/><path d="M22 15 C20.500 6 27 2.500 29.500 8" fill="none" stroke="#f6fcff" stroke-width="2.300" stroke-linecap="round"/><circle cx="8" cy="9" r="3.300" fill="#8fd2f4" stroke="#e6f6ff" stroke-width="1.100"/><path d="M15.500 19.500 L19 19.500 M24.500 19.500 L28 19.500" stroke="#7aa8c4" stroke-width="0.900"/><path d="M21 21.500 L22.500 21.500" stroke="#c0a0a0" stroke-width="1"/></svg>
 <!-- QQ penguin -->
 <svg style="left:714px;top:5px" width="30" height="33"><ellipse cx="15" cy="20" rx="11.500" ry="10" fill="#111"/><ellipse cx="15" cy="9" rx="8.500" ry="8.500" fill="#111"/><ellipse cx="15" cy="23" rx="7.500" ry="7.500" fill="#fff"/><ellipse cx="11.500" cy="7.500" rx="2.300" ry="3" fill="#fff"/><ellipse cx="18.500" cy="7.500" rx="2.300" ry="3" fill="#fff"/><circle cx="12" cy="8" r="1" fill="#111"/><circle cx="18" cy="8" r="1" fill="#111"/><ellipse cx="15" cy="12.500" rx="4.500" ry="1.700" fill="#f8a818"/><path d="M6 14.500 C11 18 19 18 24 14.500 L24 18 C19 21 11 21 6 18 Z" fill="#e0201c"/><path d="M9 18 L12.500 19 L12 25 L9 24 Z" fill="#e0201c"/><ellipse cx="9" cy="30.500" rx="4.500" ry="2" fill="#f8a818"/><ellipse cx="21" cy="30.500" rx="4.500" ry="2" fill="#f8a818"/></svg>
 <!-- chrome -->
 <svg style="left:775px;top:6px" width="31" height="31"><circle cx="15" cy="15" r="15" fill="#e23a2e"/><path d="M15 15 L2 7.500 A15 15 0 0 0 10 29.200 Z" fill="#2ea24a"/><path d="M15 15 L10 29.200 A15 15 0 0 0 29 9.500 L15 9.500 Z" fill="#f8c81c"/><circle cx="15" cy="15" r="7" fill="#f4f4f4"/><circle cx="15" cy="15" r="5.500" fill="#3a7de8"/></svg>
 <!-- cheetah -->
 <svg style="left:836px;top:5px" width="33" height="33"><defs><radialGradient id="chg" cx="0.350" cy="0.300" r="0.800"><stop offset="0" stop-color="#fbb040"/><stop offset="0.600" stop-color="#f07c14"/><stop offset="1" stop-color="#e2500c"/></radialGradient></defs><circle cx="16" cy="16" r="16" fill="url(#chg)"/><path d="M4.500 16.500 C6 10 12 6.500 18 6.500 C24.500 6.500 29 10.500 29 16 C29 19 27.500 21.500 25.500 23 C26.500 19 25 15.500 21.500 15 C18.500 14.500 17 16.500 15.500 18.500 C14.500 20 13 21 11 20.500 C12 19.500 12 18.500 11 18 C9 19 6.500 18.500 4.500 16.500 Z" fill="#fcf4e8"/><path d="M10 14 L13 13 L12 15.500 Z" fill="#d86010"/><path d="M13 22 C14 26 19 27.500 23 25" fill="none" stroke="#fce0c0" stroke-width="1.300"/></svg>
 <!-- notepad -->
 <svg style="left:895px;top:6px" width="34" height="31"><defs><linearGradient id="npg" x1="0.200" y1="0" x2="0.700" y2="1"><stop offset="0" stop-color="#bfe4ee"/><stop offset="0.450" stop-color="#5fb6cf"/><stop offset="1" stop-color="#3c98b8"/></linearGradient></defs><path d="M29.500 5.500 L32 7.500 L31 28 L28 29.500 Z" fill="#8e7c5c"/><path d="M13.500 1.500 L31.500 4.500 L28 29.500 L1.500 21 Z" fill="#e6eef2"/><path d="M14 4 L29.500 6.500 L26.500 25.500 L4.500 19 Z" fill="url(#npg)"/><path d="M13.500 1.800 L31.500 4.800" stroke="#8a949a" stroke-width="1.600" stroke-dasharray="1 1.300"/></svg>
</div>

<!-- DIALOG -->
<div id="dlg" class="abs">
 <div id="dlgtitle">应用 SVG 滤镜</div>
 <div id="dlgin" class="abs"></div>
 <div id="list" class="abs"><div id="sel" class="abs"><span>NewFilter</span></div></div>
 <div style="left:24px;top:157px;width:273px;height:20px;border:1px solid #5c5c5c;border-top:none"></div>
 <!-- fx -->
 <div class="st" style="left:225px;top:158px;font-family:'Liberation Serif',serif;font-style:italic;font-size:15px;line-height:18px;color:#d6d6d6;letter-spacing:-1px">fx</div>
 <!-- new filter button -->
 <div style="left:242px;top:158px;width:26px;height:20px;border:1px solid #6c6c6c;border-radius:2px;background:#5a5a5a"></div>
 <svg style="left:250px;top:162px" width="12" height="12"><path d="M5 0.500 L11 0.500 L11 10.500 L5 10.500 Z" fill="#e6e6e6"/><path d="M0.500 3.500 L4.500 3.500 L4.500 10.500 Z" fill="#e6e6e6"/><path d="M0.500 2.500 L4.500 2.500 L4.500 0.500 Z" fill="#a8a8a8"/></svg>
 <!-- trash -->
 <svg style="left:277px;top:161px" width="13" height="14"><path d="M0.500 3 L12.500 3 M4 2.800 L4 1 L9 1 L9 2.800" fill="none" stroke="#d8d8d8" stroke-width="1.300"/><path d="M2 3.500 L2 13 L11 13 L11 3.500" fill="none" stroke="#d8d8d8" stroke-width="1.300"/><path d="M4.800 5.500 L4.800 11 M6.500 5.500 L6.500 11 M8.200 5.500 L8.200 11" stroke="#d8d8d8" stroke-width="1"/></svg>
 <!-- preview -->
 <div style="left:24px;top:207px;width:10px;height:10px;border:1px solid #707070;border-radius:1px"></div>
 <div class="st" style="left:42px;top:205px;font-size:12px;line-height:17px;color:#747474;white-space:pre;letter-spacing:0.500px">预览 (P)</div>
 <div class="pill" style="left:110px;width:92px;border:2px solid #fff;line-height:23px">确定</div>
 <div class="pill" style="left:207px;width:92px;border:1px solid #fff;line-height:25px">取消</div>
</div>

<!-- ARROW -->
<svg style="left:0;top:0" width="1020" height="768">
 <defs><filter id="ash" x="-20%" y="-20%" width="140%" height="140%"><feGaussianBlur stdDeviation="1.600"/></filter></defs>
 <g transform="translate(-3,2)" opacity="0.700" filter="url(#ash)"><path d="M617 186 L619.600 184 L762.100 370.700 L765.100 365.300 L778.500 398.200 L751.700 376.700 L757.100 374.500 Z" fill="#1a1a1a"/></g>
 <path d="M617 186 L619.600 184 L762.100 370.700 L765.100 365.300 L778.500 398.200 L751.700 376.700 L757.100 374.500 Z" fill="#f2101a" stroke="#f2101a" stroke-width="0.600" stroke-linejoin="round"/>
</svg>

<div id="tooltip" class="abs">新建 SVG 滤镜</div>
</body>
</html>
